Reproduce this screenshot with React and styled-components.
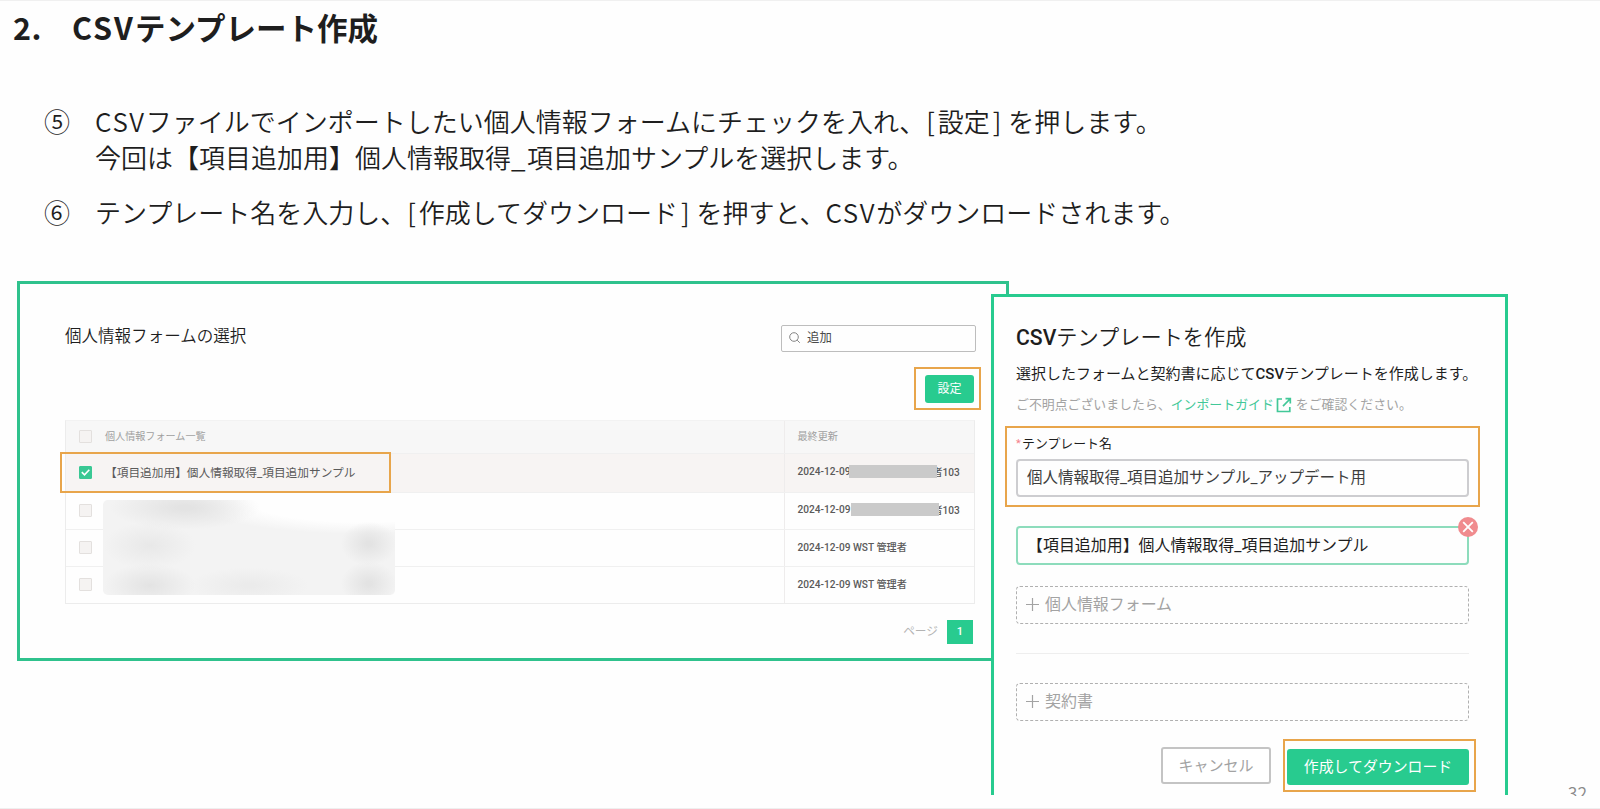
import React, { useState } from 'react';
import styled, { createGlobalStyle, css } from 'styled-components';

const colors = {
  green: '#2fc28d',
  button: '#28cb8f',
  orange: '#e8a54b',
  ink: '#1e1e1e',
  text: '#4a4a4a',
  muted: '#a3a3a3',
};

const GlobalStyle = createGlobalStyle`
  * {
    box-sizing: border-box;
  }
  body {
    margin: 0;
    background: #fff;
    font-family: Roboto, 'Noto Sans CJK JP', sans-serif;
    color: ${colors.ink};
  }
`;

const Slide = styled.main`
  width: 1600px;
  height: 809px;
  overflow: hidden;
  display: flex;
  flex-direction: column;
  background: #fefefe;
  border-top: 1px solid #f0f0f0;
  border-bottom: 1px solid #efefef;
`;

const Heading = styled.h1`
  display: flex;
  margin: 0;
  padding: 3px 0 0 13px;
  font: 700 30.5px/46px 'Noto Sans CJK JP', sans-serif;
  white-space: nowrap;
`;

const HeadingNumber = styled.span`
  width: 59px;
  letter-spacing: 0.5px;
`;

const Steps = styled.ol`
  list-style: none;
  height: 231px;
  margin: 0;
  padding: 53px 0 0 44px;
  font: 350 26px/36px 'Noto Sans CJK JP', sans-serif;
`;

const Step = styled.li`
  display: flex;
  margin-bottom: 19px;
  white-space: nowrap;
`;

const StepMark = styled.span`
  width: 51px;
`;

const Latin = styled.span`
  letter-spacing: ${({ $spacing = 0 }) => $spacing}px;
  font-weight: ${({ $weight = 'inherit' }) => $weight};
`;

// menu names stand between slightly wider brackets
const MenuName = styled.span`
  margin-right: 1px;
  &::before {
    content: '[';
    padding: 0 3px 0 1px;
  }
  &::after {
    content: ']';
    padding-left: 3px;
  }
`;

const Stage = styled.section`
  display: flex;
  align-items: flex-start;
  padding-left: 17px;
  height: 515px;
`;

/* ---- form list panel ---- */

const ListPanel = styled.div`
  flex: none;
  width: 992px;
  height: 380px;
  padding: 41px 32px 0 45px;
  border: 3px solid ${colors.green};
`;

const ListTop = styled.div`
  display: flex;
  justify-content: space-between;
`;

const ListTitle = styled.h2`
  margin: 0;
  font: 350 16.55px/21px 'Noto Sans CJK JP', sans-serif;
`;

const SearchBox = styled.label`
  display: flex;
  align-items: center;
  gap: 6px;
  width: 195px;
  height: 27px;
  margin-right: -2px;
  padding: 0 8px 2px 7px;
  border: 1px solid #bdbdbd;
  border-radius: 2px;
  font-size: 12.4px;
  line-height: 24px;
  color: ${colors.text};
`;

const highlight = css`
  border: 2px solid ${colors.orange};
`;

const ApplyFrame = styled.div`
  ${highlight}
  width: 67px;
  height: 43px;
  margin: 15px -7px 10px auto;
  padding: 6px 5px 0 9px;
`;

const Button = styled.button`
  display: flex;
  align-items: center;
  justify-content: center;
  width: ${({ $width }) => $width}px;
  height: ${({ $height }) => $height}px;
  padding: 0 0 2px;
  border: 0;
  border-radius: 3px;
  background: ${colors.button};
  color: #fff;
  font: 400 ${({ $size }) => $size}px/1 'Noto Sans CJK JP', sans-serif;
  white-space: nowrap;
`;

const CancelButton = styled(Button)`
  border: 2px solid #c4c4c4;
  background: #fff;
  color: ${colors.muted};
`;

const Table = styled.div`
  position: relative;
  width: 910px;
  margin-left: -0.5px;
  border: 1px solid #ececec;
  border-top-color: #f2f2f2;
`;

const Row = styled.div`
  display: grid;
  grid-template-columns: 38px 681px 1fr;
  align-items: stretch;
  height: ${({ $height = 37 }) => $height}px;
  background: ${({ $tone }) => $tone || '#fefefe'};
  color: ${({ $head }) => ($head ? '#a0a0a0' : '#5a5a5a')};
  font-size: ${({ $head }) => ($head ? 10.1 : 11.7)}px;
  & + & {
    border-top: 1px solid #f0f0f0;
  }
`;

const CheckCell = styled.div`
  display: flex;
  align-items: center;
  padding: 0 0 1px 13px;
`;

const Checkbox = styled.span`
  display: flex;
  width: 13px;
  height: 13px;
  border: 1px solid ${({ $on }) => ($on ? '#3ac894' : '#e3e0de')};
  border-radius: 1px;
  background: ${({ $on }) => ($on ? '#3ac894' : '#f5f3f2')};
`;

const NameCell = styled.div`
  display: flex;
  align-items: center;
  padding: 0 0 4px 1.5px;
  border-right: 1px solid #eeecec;
`;

const DateCell = styled.div`
  display: flex;
  align-items: center;
  padding: 0 0 ${({ $head }) => ($head ? 4 : 3)}px 13px;
  font-size: 10.15px;
  font-weight: ${({ $head }) => ($head ? 400 : 500)};
  white-space: pre;
`;

// grey block over the name of the editor
const Redaction = styled.span`
  align-self: center;
  position: relative;
  z-index: 1;
  width: 88px;
  height: 13px;
  margin: 0 ${({ $shift = 0 }) => -5 - $shift}px 0 ${({ $shift = 0 }) => $shift - 1}px;
  background: #cacaca;
`;

const RowFrame = styled.div`
  ${highlight}
  position: absolute;
  left: -6px;
  top: 31px;
  width: 331px;
  height: 41px;
`;

const Smudge = styled.div`
  position: absolute;
  left: 37px;
  top: 79px;
  width: 292px;
  height: 95px;
  border-radius: 5px;
  background:
    radial-gradient(ellipse 75px 22px at 28% 8%, #e3e3e3 10%, transparent),
    radial-gradient(ellipse 46px 24px at 16% 48%, #e8e8e8 0%, transparent),
    radial-gradient(ellipse 46px 22px at 16% 90%, #e3e3e3 0%, transparent),
    radial-gradient(ellipse 28px 22px at 91% 46%, #e3e3e3 10%, transparent),
    radial-gradient(ellipse 28px 22px at 91% 88%, #e3e3e3 10%, transparent),
    radial-gradient(ellipse 60px 18px at 50% 90%, #ebebeb 10%, transparent),
    radial-gradient(ellipse 170px 34px at 88% 0%, #fefefe 65%, transparent),
    #f3f3f3;
`;

const Pager = styled.div`
  display: flex;
  align-items: center;
  justify-content: flex-end;
  gap: 9px;
  margin-right: 1px;
  padding: 16px 0 0;
  font-size: 11.7px;
  line-height: 20px;
  color: #b3b3b3;
`;

const PagerLabel = styled.span`
  padding-bottom: 2px;
`;

const PageNumber = styled.span`
  width: 26px;
  height: 24px;
  background: ${colors.button};
  color: #fff;
  font-size: 11px;
  font-weight: 500;
  line-height: 23px;
  text-align: center;
`;

/* ---- template dialog ---- */

const Dialog = styled.div`
  flex: none;
  width: 517px;
  height: 501px;
  margin: 13px 0 0 -18px;
  padding: 27px 35px 0 22px;
  border: 3px solid ${colors.button};
  border-bottom: 0;
  background: #fefefe;
  white-space: nowrap;
`;

const DialogTitle = styled.h2`
  margin: 0;
  font-size: 21.2px;
  font-weight: 350;
  line-height: 28px;
`;

const DialogLead = styled.p`
  margin: 8px 0 0;
  font-size: 15px;
  line-height: 28px;
`;

const Help = styled.p`
  display: flex;
  align-items: center;
  margin: 6px 0 0;
  font-size: 12.9px;
  line-height: 22px;
  color: ${colors.muted};
`;

const GuideLink = styled.a`
  display: flex;
  align-items: center;
  gap: 2px;
  margin-right: 4px;
  color: #42c898;
`;

const FieldFrame = styled.div`
  ${highlight}
  width: 475px;
  height: 81px;
  margin: 10px 0 19px -11px;
  padding: 6px 9px 0;
`;

const FieldLabel = styled.div`
  display: flex;
  height: 25px;
  font-size: 12.9px;
  line-height: 20px;
`;

const Required = styled.span`
  width: 6px;
  color: #f5808a;
  font-size: 11px;
`;

const Box = styled.div`
  position: relative;
  display: flex;
  align-items: center;
  width: 453px;
  height: ${({ $height = 38 }) => $height}px;
  padding: 0 0 1px 9px;
  border-radius: 4px;
  font-size: 15.95px;
  line-height: 22px;
`;

const TextField = styled(Box)`
  border: 2px solid #cdcdd0;
  font-size: 15.5px;
  color: #3d3d3d;
`;

const FormCard = styled(Box)`
  border: 2px solid #8ddcbc;
  padding-bottom: 0;
`;

const AddBox = styled(Box)`
  gap: 6px;
  margin-top: ${({ $top = 0 }) => $top}px;
  border: 1px dashed #b0b0b0;
  color: ${colors.muted};
`;

const RemoveBadge = styled.button`
  position: absolute;
  top: -11px;
  right: -11px;
  width: 20px;
  height: 20px;
  padding: 0;
  border: 0;
  border-radius: 50%;
  background: #f08b8e;
  svg {
    display: block;
  }
`;

const Divider = styled.hr`
  height: 1px;
  width: 453px;
  margin: 29px 0;
  border: 0;
  background: #eeeeee;
`;

const Actions = styled.div`
  display: flex;
  align-items: center;
  justify-content: flex-end;
  gap: 12px;
  margin: 18px -4px 0 0;
`;

const DownloadFrame = styled.div`
  ${highlight}
  width: 193px;
  height: 53px;
  margin-right: -2px;
  padding: 8px 0 0 2px;
`;

const PageMark = styled.div`
  align-self: flex-end;
  height: 12px;
  margin: 0 13px 0 auto;
  overflow: hidden;
  color: #8a8a8a;
  font: 350 17.5px/18px 'Noto Sans CJK JP', sans-serif;
`;

const SearchIcon = () => (
  <svg width="12" height="12" viewBox="0 0 12 12" fill="none" stroke="#858585">
    <circle cx="5" cy="5" r="4.3" />
    <path d="M8.2 8.2 10.8 10.8" />
  </svg>
);

const CheckIcon = () => (
  <svg width="11" height="11" viewBox="0 0 11 11" fill="none" stroke="#fff" strokeWidth="1.6">
    <path d="M1.8 5.2 4.5 7.8 9.3 2.8" />
  </svg>
);

// box broken at its top right corner, with an arrow going out
const ExternalIcon = () => (
  <svg width="16" height="16" viewBox="0 0 16 16" fill="none" stroke="#42c898" strokeWidth="1.7">
    <path d="M6 2H1.5V14.5H13.8V10M9.5 1.7H14.3V6.5M14 2 7 9.2" />
  </svg>
);

const CrossIcon = () => (
  <svg width="20" height="20" viewBox="0 0 20 20" fill="none" stroke="#fff" strokeWidth="1.8">
    <path d="M5.2 5.2 14.8 14.8M14.8 5.2 5.2 14.8" />
  </svg>
);

const PlusIcon = () => (
  <svg width="13" height="13" viewBox="0 0 13 13" fill="none" stroke="#a3a3a3" strokeWidth="1.2">
    <path d="M6.5 0V13M0 6.5H13" />
  </svg>
);

const SAMPLE = '【項目追加用】個人情報取得_項目追加サンプル';

const rows = [
  { id: 1, name: SAMPLE, date: '2024-12-09', tail: '者103', height: 39, shift: 0 },
  { id: 2, date: '2024-12-09', tail: '者103', shift: 1.5 },
  { id: 3, date: '2024-12-09 WST 管理者' },
  { id: 4, date: '2024-12-09 WST 管理者' },
];

const FormTable = () => {
  const [checked, setChecked] = useState(1);

  return (
    <Table>
      <Row $head $height={32} $tone="#f7f7f7">
        <CheckCell>
          <Checkbox />
        </CheckCell>
        <NameCell>個人情報フォーム一覧</NameCell>
        <DateCell $head>最終更新</DateCell>
      </Row>
      {rows.map((row) => (
        <Row key={row.id} $height={row.height} $tone={row.id === checked ? '#f7f4f3' : null} onClick={() => setChecked(row.id)}>
          <CheckCell>
            <Checkbox $on={row.id === checked}>{row.id === checked && <CheckIcon />}</Checkbox>
          </CheckCell>
          <NameCell>{row.name}</NameCell>
          <DateCell>
            <span>{row.date}</span>
            {row.tail && <Redaction $shift={row.shift} />}
            {row.tail && <span>{row.tail}</span>}
          </DateCell>
        </Row>
      ))}
      <RowFrame />
      <Smudge />
    </Table>
  );
};

const TemplateDialog = () => (
  <Dialog>
    <DialogTitle>
      <Latin $weight={500}>CSV</Latin>テンプレートを作成
    </DialogTitle>
    <DialogLead>
      選択したフォームと契約書に応じて<Latin $weight={500}>CSV</Latin>テンプレートを作成します。
    </DialogLead>
    <Help>
      ご不明点ございましたら、
      <GuideLink>
        インポートガイド
        <ExternalIcon />
      </GuideLink>
      をご確認ください。
    </Help>
    <FieldFrame>
      <FieldLabel>
        <Required>*</Required>テンプレート名
      </FieldLabel>
      <TextField>個人情報取得_項目追加サンプル_アップデート用</TextField>
    </FieldFrame>
    <FormCard $height={39}>
      {SAMPLE}
      <RemoveBadge aria-label="削除">
        <CrossIcon />
      </RemoveBadge>
    </FormCard>
    <AddBox $top={21}>
      <PlusIcon />
      個人情報フォーム
    </AddBox>
    <Divider />
    <AddBox>
      <PlusIcon />
      契約書
    </AddBox>
    <Actions>
      <CancelButton $width={110} $height={37} $size={15}>
        キャンセル
      </CancelButton>
      <DownloadFrame>
        <Button $width={182} $height={36} $size={14.9}>
          作成してダウンロード
        </Button>
      </DownloadFrame>
    </Actions>
  </Dialog>
);

const App = () => (
  <>
    <GlobalStyle />
    <Slide>
      <Heading>
        <HeadingNumber>2.</HeadingNumber>
        <span>
          <Latin $spacing={2}>CSV</Latin>テンプレート作成
        </span>
      </Heading>
      <Steps>
        <Step>
          <StepMark>⑤</StepMark>
          <div>
            <Latin $spacing={1.6}>CSV</Latin>ファイルでインポートしたい個人情報フォームにチェックを入れ、<MenuName>設定</MenuName> を押します。
            <br />
            今回は【項目追加用】個人情報取得<Latin $spacing={1.5}>_</Latin>項目追加サンプルを選択します。
          </div>
        </Step>
        <Step>
          <StepMark>⑥</StepMark>
          <div>
            テンプレート名を入力し、<MenuName>作成してダウンロード</MenuName> を押すと、<Latin $spacing={1.6}>CSV</Latin>がダウンロードされます。
          </div>
        </Step>
      </Steps>
      <Stage>
        <ListPanel>
          <ListTop>
            <ListTitle>個人情報フォームの選択</ListTitle>
            <SearchBox>
              <SearchIcon />
              追加
            </SearchBox>
          </ListTop>
          <ApplyFrame>
            <Button $width={49} $height={28} $size={12}>
              設定
            </Button>
          </ApplyFrame>
          <FormTable />
          <Pager>
            <PagerLabel>ページ</PagerLabel>
            <PageNumber>1</PageNumber>
          </Pager>
        </ListPanel>
        <TemplateDialog />
        <PageMark>32</PageMark>
      </Stage>
    </Slide>
  </>
);

export default App;
